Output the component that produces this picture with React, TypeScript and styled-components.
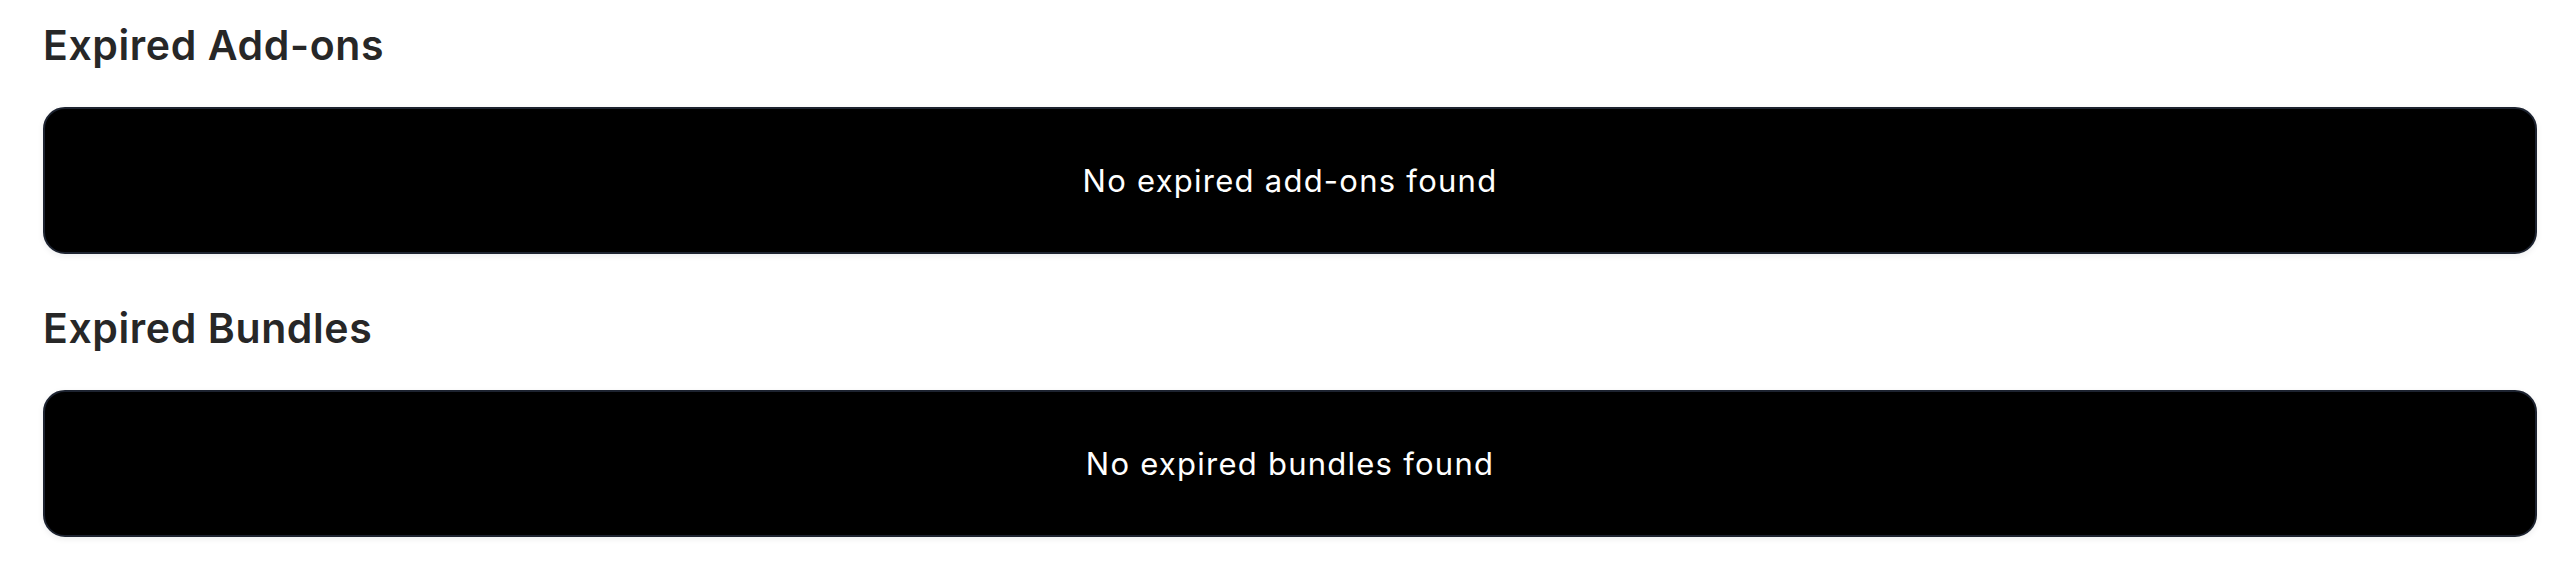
import styled, { createGlobalStyle } from 'styled-components';

const GlobalStyle = createGlobalStyle`
  html, body {
    margin: 0;
    padding: 0;
    background: #ffffff;
  }
  body {
    font-family: Inter, "Open Sans", "Liberation Sans", sans-serif;
  }
`;

const Page = styled.main`
  display: flex;
  flex-direction: column;
  padding: 15px 37px 0 43px;
`;

const Section = styled.section`
  display: flex;
  flex-direction: column;
  margin-bottom: 44px;
`;

const Title = styled.h2`
  margin: 2px 0 34px;
  font-size: 41px;
  line-height: 56px;
  font-weight: 600;
  color: #272727;
  letter-spacing: 0.6px;
`;

const EmptyCard = styled.div`
  display: flex;
  align-items: center;
  justify-content: center;
  height: 147px;
  box-sizing: border-box;
  background: #000000;
  border: 2px solid #1d2330;
  border-radius: 22px;
  box-shadow: 0 2px 6px rgba(15, 23, 42, 0.08);
  color: #ffffff;
  font-size: 31px;
  font-weight: 400;
  letter-spacing: 1.25px;
`;

const sections = [
  { title: 'Expired Add-ons', empty: 'No expired add-ons found' },
  { title: 'Expired Bundles', empty: 'No expired bundles found' },
];

export default function App() {
  return (
    <>
      <GlobalStyle />
      <Page>
        {sections.map((s) => (
          <Section key={s.title}>
            <Title>{s.title}</Title>
            <EmptyCard>{s.empty}</EmptyCard>
          </Section>
        ))}
      </Page>
    </>
  );
}
